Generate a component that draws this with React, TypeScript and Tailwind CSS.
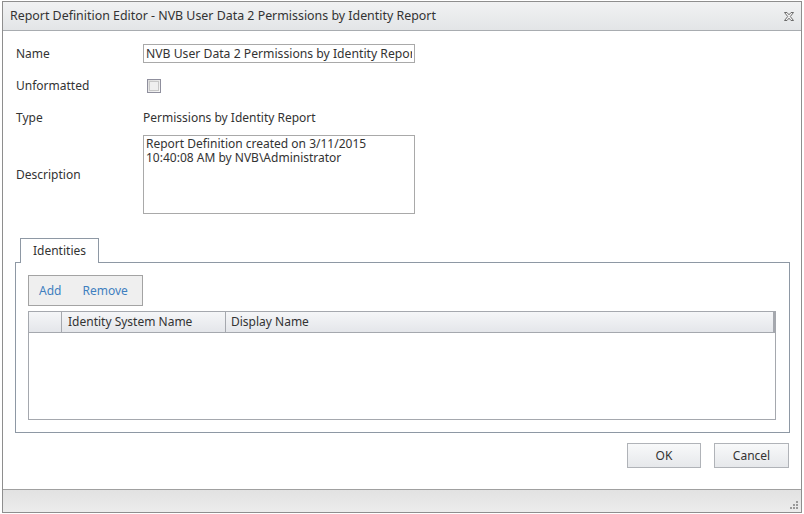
import React, { useState } from 'react';

const font = { fontFamily: '"Noto Sans", "Open Sans", sans-serif' };

const CloseIcon = () => (
  <svg width="12" height="11" viewBox="0 0 12 11" className="block">
    <path
      d="M1.5 1.5 H4 L6 3.8 L8 1.5 H10.5 L7.3 5.5 L10.5 9.5 H8 L6 7.2 L4 9.5 H1.5 L4.7 5.5 Z"
      fill="#f4f4f4"
      stroke="#6b6b6b"
      strokeWidth="1"
    />
  </svg>
);

const Grip = () => (
  <svg width="10" height="10" viewBox="0 0 10 10" className="block">
    {[
      [8, 2],
      [5, 5],
      [8, 5],
      [2, 8],
      [5, 8],
      [8, 8],
    ].map(([x, y]) => (
      <rect key={`${x}-${y}`} x={x - 1} y={y - 1} width="2" height="2" fill="#9a9a9a" />
    ))}
  </svg>
);

export default function App() {
  const [name, setName] = useState('NVB User Data 2 Permissions by Identity Report');
  const [unformatted, setUnformatted] = useState(false);
  const [description, setDescription] = useState(
    'Report Definition created on 3/11/2015 10:40:08 AM by NVB\\Administrator'
  );

  return (
    <div className="w-[804px] h-[514px] bg-white pt-px pl-[2px]" style={font}>
      <div className="w-[800px] h-[512px] border border-[#8e8e8e] flex flex-col text-[12px] text-[#333]">
        {/* Title bar */}
        <div className="h-[29px] shrink-0 flex items-center justify-between pl-[7px] pr-[6px] bg-gradient-to-b from-[#f1f2f3] to-[#e3e5e7] border-b border-[#a8acb0]">
          <span className="text-[12.4px] text-[#333]">
            Report Definition Editor - NVB User Data 2 Permissions by Identity Report
          </span>
          <CloseIcon />
        </div>

        {/* Body */}
        <div className="flex-1 flex flex-col px-[12px]">
          <div className="grid grid-cols-[128px_1fr] items-center pl-[1px] pt-[13px]">
            <span className="h-[19px] leading-[19px]">Name</span>
            <input
              value={name}
              onChange={(e) => setName(e.target.value)}
              className="-ml-px w-[272px] h-[19px] border border-[#a9a9a9] px-[2px] text-[12.2px] text-[#333] outline-none"
            />

            <span className="mt-[13px] leading-[19px]">Unformatted</span>
            <div className="mt-[13px] h-[19px] flex items-center pl-[3px]">
              <button
                onClick={() => setUnformatted(!unformatted)}
                className="w-[14px] h-[14px] border border-[#8f8f9d] bg-gradient-to-br from-[#dcdcdc] to-[#f7f7f7] p-[1px]"
              >
                <div className="w-full h-full border border-[#c7c7c7] bg-[#efefef]" />
              </button>
            </div>

            <span className="mt-[13px] leading-[19px]">Type</span>
            <span className="-ml-px mt-[13px] leading-[19px]">Permissions by Identity Report</span>

            <span className="mt-[8px]">Description</span>
            <textarea
              value={description}
              onChange={(e) => setDescription(e.target.value)}
              className="-ml-px mt-[8px] w-[272px] h-[79px] border border-[#a9a9a9] px-[2px] py-px text-[12px] leading-[14px] text-[#333] resize-none outline-none"
            />
          </div>

          {/* Tabs */}
          <div className="mt-[23px] pl-[5px] flex">
            <div className="h-[25px] w-[79px] border border-[#8e98a4] border-b-0 bg-white flex items-center justify-center relative top-px z-10">
              Identities
            </div>
          </div>
          <div className="w-[775px] h-[171px] border border-[#8e98a4] px-[12px] pt-[12px]">
            <div className="flex h-[31px] w-[115px] border border-[#a3a3a3] bg-[#efefef] items-center text-[#3f7fbf] pl-[10px] gap-[21px]">
              <span className="cursor-pointer">Add</span>
              <span className="cursor-pointer">Remove</span>
            </div>
            <div className="mt-[5px] h-[109px] w-[748px] border border-[#a5a8ae] flex flex-col">
              <div className="h-[21px] flex bg-gradient-to-b from-[#f5f6f8] to-[#e4e6ea] border-b border-[#a5a8ae] border-r-2 border-r-[#a5a8ae]">
                <div className="w-[33px] border-r border-[#a5a8ae]" />
                <div className="w-[164px] border-r border-[#a5a8ae] pl-[6px] leading-[20px]">
                  Identity System Name
                </div>
                <div className="flex-1 pl-[5px] leading-[20px]">Display Name</div>
              </div>
              <div className="flex-1 bg-white" />
            </div>
          </div>

          {/* Buttons */}
          <div className="mt-[10px] flex justify-end gap-[13px]">
            <button className="w-[74px] h-[25px] border border-[#b0b3b8] bg-gradient-to-b from-[#f8f9fa] to-[#e6e8eb] text-[#333]">
              OK
            </button>
            <button className="w-[75px] h-[25px] border border-[#b0b3b8] bg-gradient-to-b from-[#f8f9fa] to-[#e6e8eb] text-[#333]">
              Cancel
            </button>
          </div>
        </div>

        {/* Footer */}
        <div className="h-[23px] shrink-0 border-t border-[#a0a0a0] bg-gradient-to-b from-[#e2e2e2] to-[#ececec] flex items-end justify-end pr-[2px] pb-[2px]">
          <Grip />
        </div>
      </div>
    </div>
  );
}
